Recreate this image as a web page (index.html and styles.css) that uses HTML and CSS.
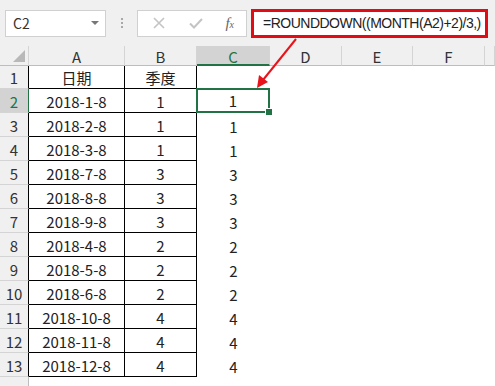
FILE: index.html
```html
<!DOCTYPE html>
<html lang="zh-CN">
<head>
  <meta charset="UTF-8" />
  <title>ROUNDDOWN 季度</title>
  <link rel="stylesheet" href="styles.css">
</head>
<body>
  <div class="toolbar">
    <div class="name-box">
      <span>C2</span>
      <span class="caret"></span>
    </div>
    <div class="grip"><i></i><i></i><i></i></div>
    <div class="fx-buttons">
      <svg width="14" height="14" viewBox="0 0 14 14"><path d="M2 2 L12 12 M12 2 L2 12" stroke="#c4c4c4" stroke-width="1.6" fill="none"/></svg>
      <svg width="16" height="14" viewBox="0 0 16 14"><path d="M2 7.5 L6 11.5 L14 3" stroke="#c4c4c4" stroke-width="2" fill="none"/></svg>
      <span class="fx">f<sub>x</sub></span>
    </div>
    <div class="formula">=ROUNDDOWN((MONTH(A2)+2)/3,)</div>
  </div>

  <div class="sheet">
    <div class="corner"><span></span></div>
    <div class="col-head">A</div>
    <div class="col-head">B</div>
    <div class="col-head active">C</div>
    <div class="col-head">D</div>
    <div class="col-head">E</div>
    <div class="col-head">F</div>
    <div class="col-head"></div>

    <div class="row-head">1</div><div class="cell a">日期</div><div class="cell b">季度</div><div class="cell"></div><div class="cell"></div><div class="cell"></div><div class="cell"></div><div class="cell"></div>
    <div class="row-head active">2</div><div class="cell a">2018-1-8</div><div class="cell b">1</div><div class="cell selected">1</div><div class="cell"></div><div class="cell"></div><div class="cell"></div><div class="cell"></div>
    <div class="row-head">3</div><div class="cell a">2018-2-8</div><div class="cell b">1</div><div class="cell">1</div><div class="cell"></div><div class="cell"></div><div class="cell"></div><div class="cell"></div>
    <div class="row-head">4</div><div class="cell a">2018-3-8</div><div class="cell b">1</div><div class="cell">1</div><div class="cell"></div><div class="cell"></div><div class="cell"></div><div class="cell"></div>
    <div class="row-head">5</div><div class="cell a">2018-7-8</div><div class="cell b">3</div><div class="cell">3</div><div class="cell"></div><div class="cell"></div><div class="cell"></div><div class="cell"></div>
    <div class="row-head">6</div><div class="cell a">2018-8-8</div><div class="cell b">3</div><div class="cell">3</div><div class="cell"></div><div class="cell"></div><div class="cell"></div><div class="cell"></div>
    <div class="row-head">7</div><div class="cell a">2018-9-8</div><div class="cell b">3</div><div class="cell">3</div><div class="cell"></div><div class="cell"></div><div class="cell"></div><div class="cell"></div>
    <div class="row-head">8</div><div class="cell a">2018-4-8</div><div class="cell b">2</div><div class="cell">2</div><div class="cell"></div><div class="cell"></div><div class="cell"></div><div class="cell"></div>
    <div class="row-head">9</div><div class="cell a">2018-5-8</div><div class="cell b">2</div><div class="cell">2</div><div class="cell"></div><div class="cell"></div><div class="cell"></div><div class="cell"></div>
    <div class="row-head">10</div><div class="cell a">2018-6-8</div><div class="cell b">2</div><div class="cell">2</div><div class="cell"></div><div class="cell"></div><div class="cell"></div><div class="cell"></div>
    <div class="row-head">11</div><div class="cell a">2018-10-8</div><div class="cell b">4</div><div class="cell">4</div><div class="cell"></div><div class="cell"></div><div class="cell"></div><div class="cell"></div>
    <div class="row-head">12</div><div class="cell a">2018-11-8</div><div class="cell b">4</div><div class="cell">4</div><div class="cell"></div><div class="cell"></div><div class="cell"></div><div class="cell"></div>
    <div class="row-head">13</div><div class="cell a">2018-12-8</div><div class="cell b">4</div><div class="cell">4</div><div class="cell"></div><div class="cell"></div><div class="cell"></div><div class="cell"></div>
    <div class="row-head last"></div><div class="cell"></div><div class="cell"></div><div class="cell"></div><div class="cell"></div><div class="cell"></div><div class="cell"></div><div class="cell"></div>
  </div>

  <svg class="arrow" width="495" height="386" viewBox="0 0 495 386">
    <line x1="296" y1="39" x2="263" y2="80" stroke="#e8141b" stroke-width="2" />
    <polygon points="257,88 259,75 268,82" fill="#e8141b" />
  </svg>
</body>
</html>
```

FILE: styles.css
```css
body {
  margin: 0;
  width: 495px;
  height: 386px;
  overflow: hidden;
  background: #fff;
  font-family: "Noto Sans CJK SC", "Noto Sans", sans-serif;
  color: #222;
  position: relative;
}
.toolbar {
  height: 46px;
  background: #f0f0f0;
  display: flex;
  align-items: center;
  padding-left: 5px;
  box-sizing: border-box;
}
.name-box {
  width: 101px;
  height: 27px;
  box-sizing: border-box;
  background: #fff;
  border: 1px solid #d0d0d0;
  display: flex;
  align-items: center;
  justify-content: space-between;
  padding: 0 6px 0 7px;
  font-size: 14px;
  color: #333;
}
.caret {
  width: 0;
  height: 0;
  border-left: 4px solid transparent;
  border-right: 4px solid transparent;
  border-top: 4px solid #777;
}
.grip {
  width: 31px;
  display: flex;
  flex-direction: column;
  align-items: center;
  gap: 2px;
}
.grip i {
  width: 2px;
  height: 2px;
  background: #a8a8a8;
}
.fx-buttons {
  width: 110px;
  height: 27px;
  box-sizing: border-box;
  background: #fff;
  border: 1px solid #d0d0d0;
  display: flex;
  align-items: center;
  justify-content: space-between;
  padding: 0 12px 0 14px;
}
.fx {
  font-family: "Liberation Serif", serif;
  font-style: italic;
  font-size: 15px;
  color: #666;
}
.fx sub {
  font-size: 10px;
  vertical-align: 0;
}
.formula {
  margin-left: 4px;
  width: 237px;
  height: 29px;
  box-sizing: border-box;
  background: #fff;
  border: 3px solid #e10d14;
  display: flex;
  align-items: center;
  padding-left: 9px;
  font-family: "Liberation Sans", Arial, sans-serif;
  font-size: 14px;
  letter-spacing: -0.5px;
  color: #222;
  white-space: nowrap;
}
.sheet {
  display: grid;
  grid-template-columns: 29px 96px 72px 73px 72px 71px 72px 1fr;
  grid-template-rows: 20px 23px repeat(12, 24px) 24px;
  background: #fff;
}
.corner,
.col-head {
  background: #f0f0f0;
  border-bottom: 1px solid #bdbdbd;
  border-right: 1px solid #d4d4d4;
  box-sizing: border-box;
}
.corner {
  position: relative;
}
.corner span {
  position: absolute;
  right: 3px;
  bottom: 3px;
  width: 0;
  height: 0;
  border-left: 12px solid transparent;
  border-bottom: 12px solid #b8b8b8;
}
.col-head {
  font-size: 15px;
  color: #333;
  text-align: center;
  line-height: 22px;
}
.col-head.active {
  background: #d3d3d3;
  border-bottom: 2px solid #217346;
  color: #217346;
}
.row-head {
  background: #f0f0f0;
  border-bottom: 1px solid #d4d4d4;
  border-right: 1px solid #000;
  box-sizing: border-box;
  font-size: 15px;
  color: #333;
  display: flex;
  align-items: flex-end;
  justify-content: center;
  line-height: 20px;
}
.row-head.active {
  background: #d3d3d3;
  border-right-color: #217346;
  color: #217346;
}
.row-head.last {
  border-right-color: #bdbdbd;
}
.cell {
  box-sizing: border-box;
  font-size: 15px;
  text-align: center;
  display: flex;
  align-items: flex-end;
  justify-content: center;
  line-height: 21px;
}
.cell.a,
.cell.b {
  border-right: 1px solid #000;
  border-bottom: 1px solid #000;
}
.cell.selected {
  border: 2px solid #217346;
  margin-top: -1px;
  margin-left: -1px;
  position: relative;
}
.cell.selected::after {
  content: "";
  position: absolute;
  right: -5px;
  bottom: -5px;
  width: 6px;
  height: 6px;
  background: #217346;
  border: 1px solid #fff;
}
.arrow {
  position: absolute;
  left: 0;
  top: 0;
  pointer-events: none;
}
```
